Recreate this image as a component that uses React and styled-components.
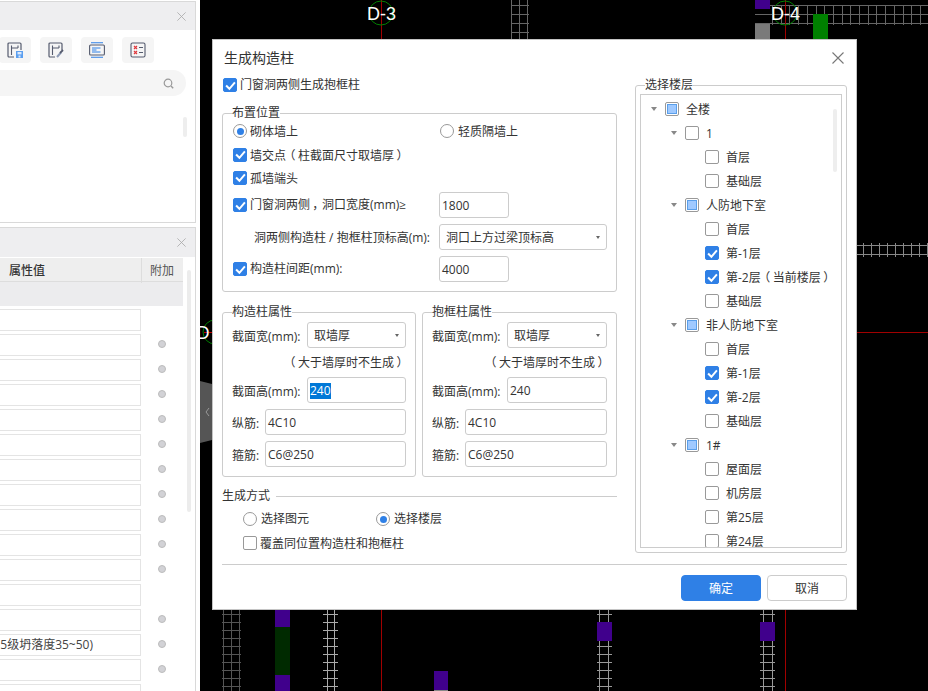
import React from "react";
import styled, { createGlobalStyle } from "styled-components";

const GlobalStyle = createGlobalStyle`
  html, body {
    margin: 0;
    padding: 0;
    background: #000;
  }
  body {
    font-family: "Open Sans", "Noto Sans CJK SC", sans-serif;
    font-size: 12px;
    color: #333;
  }
  * {
    box-sizing: border-box;
  }
`;

const Page = styled.div`
  display: flex;
  width: 928px;
  height: 691px;
  overflow: hidden;
`;

// left property panels
const Sidebar = styled.aside`
  width: 200px;
  flex: none;
  display: flex;
  flex-direction: column;
  background: #fff;
  padding-top: 1px;
`;

const Panel = styled.section`
  width: 196px;
  border: 1px solid #d9d9d9;
  border-left: none;
  display: flex;
  flex-direction: column;
  overflow: hidden;
  ${(p) => (p.$grow ? "flex: 1; margin-top: 4px; border-bottom: none;" : "height: 222px;")}
`;

const PanelHeader = styled.div`
  height: ${(p) => p.$h}px;
  flex: none;
  background: #eeeef0;
  display: flex;
  align-items: center;
  justify-content: flex-end;
  padding-right: 9px;
`;

const Toolbar = styled.div`
  display: flex;
  gap: 9px;
  margin: 7px 0 0 -1px;
`;

const ToolButton = styled.div`
  width: 32px;
  height: 26px;
  background: #f5f5f5;
  border-radius: 4px;
  display: flex;
  align-items: center;
  justify-content: center;
`;

const Search = styled.div`
  width: 186px;
  height: 26px;
  margin-top: 7px;
  background: #f5f5f5;
  border-radius: 0 13px 13px 0;
  display: flex;
  align-items: center;
  justify-content: flex-end;
  padding-right: 12px;
`;

const ListArea = styled.div`
  flex: 1;
  display: flex;
  justify-content: flex-end;
  padding: 21px 8px 0 0;
`;

const Thumb = styled.div`
  width: 4px;
  height: ${(p) => p.$h}px;
  border-radius: 2px;
  background: ${(p) => p.$c || "#eee"};
`;

const TableWrap = styled.div`
  flex: 1;
  display: flex;
  margin-top: 1px;
`;

const Table = styled.div`
  width: 183px;
  flex: none;
`;

const TableHead = styled.div`
  height: 24px;
  display: grid;
  grid-template-columns: 142px 41px;
  background: #eee;
  border-bottom: 1px solid #ddd;
  font-size: 12px;
  line-height: 25px;
`;

const HeadCell = styled.div`
  padding-left: ${(p) => p.$pad}px;
  font-weight: ${(p) => (p.$bold ? 500 : 400)};
  border-right: ${(p) => (p.$line ? "1px solid #ddd" : "none")};
  color: ${(p) => (p.$bold ? "#333" : "#555")};
`;

const GroupRow = styled.div`
  height: 24px;
  background: #ececee;
  margin-bottom: 3px;
`;

const PropRow = styled.div`
  height: 25px;
  display: grid;
  grid-template-columns: 141px 42px;
`;

const PropCell = styled.div`
  height: 22px;
  border: 1px solid #e4e4e4;
  border-left: none;
  overflow: hidden;
  display: flex;
  justify-content: flex-end;
  white-space: nowrap;
  line-height: 20px;
  padding-right: 47px;
  color: #444;
`;

const DotCell = styled.div`
  display: flex;
  align-items: flex-start;
  justify-content: center;
  padding-top: 6px;
`;

const Dot = styled.span`
  width: 8px;
  height: 8px;
  border-radius: 50%;
  background: #d2d2d6;
  border: 1px solid #bcbcbc;
`;

const ScrollColumn = styled.div`
  padding: 12px 0 0 4px;
`;

// CAD canvas
const Canvas = styled.main`
  position: relative;
  flex: 1;
  background: #000;
`;

const CadSvg = styled.svg`
  display: block;
`;

const CadText = styled.text`
  font-family: "Liberation Sans", sans-serif;
  font-size: 18px;
  fill: #fff;
`;

// dialog
const Dialog = styled.div`
  position: absolute;
  left: 12px;
  top: 39px;
  width: 645px;
  height: 571px;
  background: #fff;
  border: 1px solid #c4c4c4;
  padding: 0 9px;
  display: flex;
  flex-direction: column;
`;

const DialogHeader = styled.header`
  height: 36px;
  flex: none;
  display: flex;
  align-items: center;
  justify-content: space-between;
  padding: 0 3px 0 2px;
`;

const DialogTitle = styled.h1`
  margin: 0;
  font-size: 14px;
  font-weight: 400;
  line-height: 20px;
  color: #333;
`;

const DialogBody = styled.div`
  height: 488px;
  flex: none;
  display: grid;
  grid-template-columns: 395px 212px;
  column-gap: 18px;
`;

const LeftColumn = styled.div`
  display: flex;
  flex-direction: column;
`;

const Group = styled.fieldset`
  margin: ${(p) => p.$mt || 0}px 0 0;
  padding: ${(p) => p.$pad || "0 9px 9px"};
  border: 1px solid #ccc;
  border-radius: 3px;
  min-width: 0;
`;

const GroupTitle = styled.legend`
  margin-left: ${(p) => p.$ml ?? 0}px;
  padding: 0;
  font-size: 12px;
  line-height: 12px;
  background: #fff;
`;

const CheckLine = styled.label`
  height: ${(p) => p.$h || 24}px;
  margin-top: ${(p) => p.$mt || 0}px;
  display: flex;
  align-items: center;
  gap: ${(p) => p.$gap ?? 3}px;
  line-height: 16px;
  white-space: nowrap;
  padding-left: ${(p) => p.$pl || 0}px;
`;

// text beside a box sits a pixel lower than the box in the reference
const LineText = styled.span`
  padding-top: 2px;
`;

const RadioRow = styled.div`
  height: 24px;
  display: grid;
  grid-template-columns: 207px 1fr;
`;

const FormRow = styled.div`
  height: 26px;
  margin-top: ${(p) => p.$mt ?? 6}px;
  display: grid;
  grid-template-columns: 206px ${(p) => p.$w}px;
  align-items: center;
`;

const RowLabel = styled.div`
  padding: 2px 0 0 ${(p) => p.$pl || 0}px;
  white-space: nowrap;
  line-height: 16px;
`;

// the reference centres full-width punctuation in a one-em cell
const Punct = styled.span`
  display: inline-block;
  width: 12px;
  text-align: center;
  font-feature-settings: "palt";
`;

const BoxBase = styled.span`
  width: 14px;
  height: 14px;
  flex: none;
  display: inline-flex;
  align-items: center;
  justify-content: center;
`;

const CheckBox = styled(BoxBase)`
  border-radius: 2px;
  border: 1px solid ${(p) => (p.$state === "on" ? "#2f80e6" : "#999")};
  background: ${(p) => (p.$state === "on" ? "#2f80e6" : "#fff")};
`;

const PartialMark = styled.span`
  width: 10px;
  height: 10px;
  background: #9fc9ff;
  border: 1px solid #5a9fea;
`;

const RadioCircle = styled(BoxBase)`
  border-radius: 50%;
  border: 1px solid #999;
  background: #fff;
`;

const RadioDot = styled.span`
  width: 7px;
  height: 7px;
  border-radius: 50%;
  background: #2f80e6;
`;

const Field = styled.div`
  height: 26px;
  border: 1px solid #ccc;
  border-radius: 3px;
  background: #fff;
  padding-left: 2px;
  line-height: 25px;
  color: #333;
  white-space: nowrap;
`;

const Highlight = styled.span`
  display: inline-block;
  background: #0078d7;
  color: #fff;
  line-height: 16px;
`;

const SelectBox = styled(Field)`
  position: relative;
  padding-left: 6px;
  &::after {
    content: "";
    position: absolute;
    right: 6px;
    top: 11px;
    border-left: 2.5px solid transparent;
    border-right: 2.5px solid transparent;
    border-top: 3px solid #666;
  }
`;

const AttrColumns = styled.div`
  display: grid;
  grid-template-columns: 194px 195px;
  column-gap: 6px;
  margin-top: 14px;
`;

const AttrRow = styled.div`
  height: 26px;
  margin-top: ${(p) => p.$mt ?? 6}px;
  display: grid;
  grid-template-columns: ${(p) => (p.$short ? "33px" : "75px")} 1fr;
  align-items: center;
  white-space: nowrap;
`;

const AttrNote = styled.div`
  height: 29px;
  line-height: 30px;
  text-align: right;
  white-space: nowrap;
`;

const SectionLine = styled.div`
  display: flex;
  align-items: center;
  gap: 6px;
  height: 16px;
  margin-top: 11px;
  line-height: 16px;
  &::after {
    content: "";
    flex: 1;
    border-top: 1px solid #ccc;
  }
`;

const ModeRow = styled.div`
  display: grid;
  grid-template-columns: 133px 1fr;
  height: 16px;
  margin-top: 7px;
  padding-left: 21px;
`;

const FloorBox = styled.div`
  height: 454px;
  border: 1px solid #ccc;
  overflow: hidden;
  position: relative;
  padding-top: 2px;
`;

const TreeThumb = styled(Thumb)`
  position: absolute;
  right: 4px;
  top: 14px;
`;

const TreeRow = styled.div`
  height: 24px;
  display: flex;
  align-items: center;
  padding-left: ${(p) => 10 + p.$level * 20}px;
  white-space: nowrap;
`;

const Caret = styled.span`
  width: 14px;
  flex: none;
  display: flex;
  &::before {
    content: "";
    border-left: 3.5px solid transparent;
    border-right: 3.5px solid transparent;
    border-top: 4px solid ${(p) => (p.$show ? "#888" : "transparent")};
  }
`;

const TreeLabel = styled.span`
  margin-left: 7px;
  padding-top: 2px;
  line-height: 16px;
`;

const Divider = styled.div`
  height: 1px;
  flex: none;
  background: #ccc;
`;

const DialogFooter = styled.footer`
  display: flex;
  justify-content: flex-end;
  gap: 6px;
  padding-top: 10px;
`;

const Button = styled.button`
  width: 80px;
  height: 26px;
  padding: 0;
  border-radius: 4px;
  font: inherit;
  font-size: 12px;
  border: 1px solid ${(p) => (p.$primary ? "#2f80e6" : "#ccc")};
  background: ${(p) => (p.$primary ? "#2f80e6" : "#fff")};
  color: ${(p) => (p.$primary ? "#fff" : "#333")};
`;

const Tick = () => (
  <svg width="11" height="11" viewBox="0 0 10 10">
    <path d="M1 5 L4 8 L9 2.2" fill="none" stroke="#fff" strokeWidth="1.8" />
  </svg>
);

const Check = ({ state }) => (
  <CheckBox $state={state}>
    {state === "on" && <Tick />}
    {state === "partial" && <PartialMark />}
  </CheckBox>
);

const Radio = ({ on }) => <RadioCircle>{on && <RadioDot />}</RadioCircle>;

const CloseIcon = ({ size, color }) => (
  <svg width={size} height={size} viewBox="0 0 12 12">
    <path d="M0.5 0.5 L11.5 11.5 M11.5 0.5 L0.5 11.5" stroke={color} strokeWidth="1.1" fill="none" />
  </svg>
);

const FrameIcon = ({ children }) => (
  <svg width="16" height="16" viewBox="0 0 16 16" fill="none">
    <path d="M7 15 H2 a1 1 0 0 1 -1 -1 V2 a1 1 0 0 1 1 -1 H13 a1 1 0 0 1 1 1 V8" stroke="#555b6e" strokeWidth="1.2" />
    <path d="M4.5 13 V3.5 M4.5 6 H11 M11 3.5 V6" stroke="#555b6e" strokeWidth="1.1" />
    {children}
  </svg>
);

const SaveIcon = () => (
  <FrameIcon>
    <rect x="9" y="9" width="7" height="7" fill="#5b9ff0" />
    <rect x="10.5" y="10" width="4" height="2.4" fill="#dce9fb" />
    <rect x="11.5" y="13.5" width="2" height="2" fill="#dce9fb" />
  </FrameIcon>
);

const PickIcon = () => (
  <FrameIcon>
    <path d="M9 15 L13 10.5" stroke="#8d9ab5" strokeWidth="2" />
    <path d="M12 11 L15 8" stroke="#555b6e" strokeWidth="1.8" />
  </FrameIcon>
);

const AlignIcon = () => (
  <svg width="16" height="16" viewBox="0 0 16 16" fill="none">
    <path d="M2 0.8 H14 M2 15.2 H14" stroke="#2f80e6" strokeWidth="1.1" />
    <rect x="0.6" y="3" width="14.8" height="10" rx="1" stroke="#555b6e" strokeWidth="1.1" />
    <path d="M3 6 H11.5 M3 8 H7.5 M3 10 H11.5" stroke="#2f80e6" strokeWidth="1" />
  </svg>
);

const CheckListIcon = () => (
  <svg width="16" height="16" viewBox="0 0 16 16" fill="none">
    <rect x="1" y="1" width="14" height="14" rx="1.5" stroke="#555b6e" strokeWidth="1.1" />
    <path d="M4 4 L7 7 M7 4 L4 7 M4 9 L7 12 M7 9 L4 12" stroke="#e0393e" strokeWidth="1.2" />
    <path d="M9 5.5 H13 M9 10.5 H13" stroke="#555b6e" strokeWidth="1.1" />
  </svg>
);

const SearchIcon = () => (
  <svg width="11" height="11" viewBox="0 0 11 11" fill="none">
    <circle cx="5" cy="5" r="3.8" stroke="#999" strokeWidth="1.2" />
    <path d="M8 8 L10.2 10.2" stroke="#999" strokeWidth="1.4" />
  </svg>
);

const steps = (from, to, step) => {
  const out = [];
  for (let v = from; v <= to; v += step) out.push(Math.round(v));
  return out;
};

// a block of rebar-like grid lines in page coordinates
const GridBlock = ({ xs, ys, x1, x2, y1, y2, color }) => (
  <g stroke={color} strokeWidth="1">
    {xs.map((x) => (
      <line key={`v${x}`} x1={x + 0.5} x2={x + 0.5} y1={y1} y2={y2} />
    ))}
    {ys.map((y) => (
      <line key={`h${y}`} x1={x1} x2={x2} y1={y + 0.5} y2={y + 0.5} />
    ))}
  </g>
);

const CadDrawing = () => (
  <CadSvg width="728" height="691" viewBox="200 0 728 691">
    <GridBlock xs={[511, 519, 527]} ys={[5, 14, 23, 32]} x1={511} x2={529} y1={0} y2={39} color="#666" />
    <GridBlock xs={steps(772, 928, 8.7)} ys={[5, 14, 23]} x1={755} x2={928} y1={5} y2={25} color="#666" />
    <rect x="755" y="0" width="15" height="9" fill="#40008c" />
    <rect x="755" y="24" width="15" height="15" fill="#7a7a7a" />
    <rect x="813" y="14" width="15" height="25" fill="#008000" />
    <line x1="381.5" x2="381.5" y1="0" y2="39" stroke="#a00000" />
    <line x1="785.5" x2="785.5" y1="0" y2="39" stroke="#a00000" />
    <circle cx="381" cy="13" r="12" fill="none" stroke="#008000" />
    <circle cx="785" cy="13" r="12" fill="none" stroke="#008000" />
    <CadText x="367" y="19.5">D-3</CadText>
    <CadText x="771" y="19.5">D-4</CadText>

    <GridBlock xs={steps(863, 928, 8)} ys={[245, 254]} x1={857} x2={928} y1={243} y2={257} color="#888" />
    <line x1="857" x2="928" y1="332.5" y2="332.5" stroke="#a00000" />

    <line x1="204" x2="212" y1="332.5" y2="332.5" stroke="#c00000" />
    <circle cx="215" cy="332" r="12" fill="none" stroke="#008000" />
    <CadText x="196.5" y="338.5">D</CadText>
    <path d="M200 381 L212 384 V440 L200 443 Z" fill="#555" />
    <path d="M209 408 L206 412 L209 416" fill="none" stroke="#999" strokeWidth="1" />

    <GridBlock xs={[223, 231, 239]} ys={steps(614, 690, 8)} x1={222} x2={241} y1={610} y2={691} color="#555" />
    <GridBlock xs={[327, 334]} ys={steps(614, 690, 8)} x1={323} x2={338} y1={610} y2={691} color="#aaa" />
    <GridBlock xs={[599, 608]} ys={steps(614, 690, 8)} x1={597} x2={612} y1={610} y2={691} color="#999" />
    <GridBlock xs={[763, 772]} ys={steps(614, 690, 8)} x1={760} x2={775} y1={610} y2={691} color="#999" />
    <rect x="275" y="610" width="15" height="17" fill="#40008c" />
    <rect x="275" y="627" width="15" height="48" fill="#002a00" />
    <rect x="275" y="675" width="15" height="16" fill="#40008c" />
    <rect x="597" y="622" width="15" height="19" fill="#40008c" />
    <rect x="760" y="622" width="15" height="19" fill="#40008c" />
    <rect x="434" y="671" width="14" height="19" fill="#40008c" />
    <rect x="434" y="690" width="14" height="1" fill="#888" />
    <line x1="381.5" x2="381.5" y1="610" y2="691" stroke="#a00000" />
    <line x1="785.5" x2="785.5" y1="610" y2="691" stroke="#a00000" />
  </CadSvg>
);

const floors = [
  [0, "全楼", "partial", true],
  [1, "1", "off", true],
  [2, "首层", "off"],
  [2, "基础层", "off"],
  [1, "人防地下室", "partial", true],
  [2, "首层", "off"],
  [2, "第-1层", "on"],
  [2, <>第-2层<Punct>（</Punct>当前楼层<Punct>）</Punct></>, "on"],
  [2, "基础层", "off"],
  [1, "非人防地下室", "partial", true],
  [2, "首层", "off"],
  [2, "第-1层", "on"],
  [2, "第-2层", "on"],
  [2, "基础层", "off"],
  [1, "1#", "partial", true],
  [2, "屋面层", "off"],
  [2, "机房层", "off"],
  [2, "第25层", "off"],
  [2, "第24层", "off"],
];

const rowTexts = { 13: "5级坍落度35~50)" };
const noDot = [0, 11, 15];

const AttrGroup = ({ title, selected }) => (
  <Group $pad="0 9px 9px">
    <GroupTitle>{title}</GroupTitle>
    <AttrRow $mt={4}>
      <LineText>截面宽(mm):</LineText>
      <SelectBox>取墙厚</SelectBox>
    </AttrRow>
    <AttrNote><Punct>（</Punct>大于墙厚时不生成<Punct>）</Punct></AttrNote>
    <AttrRow $mt={0}>
      <LineText>截面高(mm):</LineText>
      <Field>{selected ? <Highlight>240</Highlight> : "240"}</Field>
    </AttrRow>
    <AttrRow $short>
      <LineText>纵筋:</LineText>
      <Field>4C10</Field>
    </AttrRow>
    <AttrRow $short>
      <LineText>箍筋:</LineText>
      <Field>C6@250</Field>
    </AttrRow>
  </Group>
);

export default function App() {
  return (
    <>
      <GlobalStyle />
      <Page>
        <Sidebar>
          <Panel>
            <PanelHeader $h={28}>
              <CloseIcon size={9} color="#aaa" />
            </PanelHeader>
            <Toolbar>
              <ToolButton><SaveIcon /></ToolButton>
              <ToolButton><PickIcon /></ToolButton>
              <ToolButton><AlignIcon /></ToolButton>
              <ToolButton><CheckListIcon /></ToolButton>
            </Toolbar>
            <Search><SearchIcon /></Search>
            <ListArea><Thumb $h={20} /></ListArea>
          </Panel>
          <Panel $grow>
            <PanelHeader $h={29}>
              <CloseIcon size={9} color="#aaa" />
            </PanelHeader>
            <TableWrap>
              <Table>
                <TableHead>
                  <HeadCell $pad={9} $bold $line>属性值</HeadCell>
                  <HeadCell $pad={8}>附加</HeadCell>
                </TableHead>
                <GroupRow />
                {steps(0, 15, 1).map((i) => (
                  <PropRow key={i}>
                    <PropCell>{rowTexts[i]}</PropCell>
                    <DotCell>{!noDot.includes(i) && <Dot />}</DotCell>
                  </PropRow>
                ))}
              </Table>
              <ScrollColumn><Thumb $h={242} $c="#ececec" /></ScrollColumn>
            </TableWrap>
          </Panel>
        </Sidebar>

        <Canvas>
          <CadDrawing />
          <Dialog>
            <DialogHeader>
              <DialogTitle>生成构造柱</DialogTitle>
              <CloseIcon size={12} color="#777" />
            </DialogHeader>
            <DialogBody>
              <LeftColumn>
                <CheckLine $h={18} $pl={1}>
                  <Check state="on" />
                  <span>门窗洞两侧生成抱框柱</span>
                </CheckLine>

                <Group $mt={13} $pad="0 9px 9px 10px">
                  <GroupTitle $ml={-1}>布置位置</GroupTitle>
                  <RadioRow>
                    <CheckLine $gap={3}><Radio on /><LineText>砌体墙上</LineText></CheckLine>
                    <CheckLine $gap={4}><Radio /><LineText>轻质隔墙上</LineText></CheckLine>
                  </RadioRow>
                  <CheckLine $h={23}>
                    <Check state="on" />
                    <LineText>墙交点<Punct>（</Punct>柱截面尺寸取墙厚<Punct>）</Punct></LineText>
                  </CheckLine>
                  <CheckLine $h={23}><Check state="on" /><LineText>孤墙端头</LineText></CheckLine>
                  <FormRow $w={70} $mt={3}>
                    <CheckLine>
                      <Check state="on" />
                      <span>门窗洞两侧<Punct>，</Punct>洞口宽度(mm)≥</span>
                    </CheckLine>
                    <Field>1800</Field>
                  </FormRow>
                  <FormRow $w={168}>
                    <RowLabel $pl={21}>洞两侧构造柱 / 抱框柱顶标高(m):</RowLabel>
                    <SelectBox>洞口上方过梁顶标高</SelectBox>
                  </FormRow>
                  <FormRow $w={70}>
                    <CheckLine><Check state="on" /><span>构造柱间距(mm):</span></CheckLine>
                    <Field>4000</Field>
                  </FormRow>
                </Group>

                <AttrColumns>
                  <AttrGroup title="构造柱属性" selected />
                  <AttrGroup title="抱框柱属性" />
                </AttrColumns>

                <SectionLine>生成方式</SectionLine>
                <ModeRow>
                  <CheckLine $h={16} $gap={4}><Radio /><span>选择图元</span></CheckLine>
                  <CheckLine $h={16} $gap={4}><Radio on /><span>选择楼层</span></CheckLine>
                </ModeRow>
                <CheckLine $h={16} $pl={21} $mt={8}>
                  <Check state="off" />
                  <LineText>覆盖同位置构造柱和抱框柱</LineText>
                </CheckLine>
              </LeftColumn>

              <div>
                <Group $mt={3} $pad="3px 4px 4px">
                  <GroupTitle $ml={5}>选择楼层</GroupTitle>
                  <FloorBox>
                    <TreeThumb $h={63} />
                    {floors.map(([level, name, state, parent], i) => (
                      <TreeRow key={i} $level={level}>
                        <Caret $show={parent} />
                        <Check state={state} />
                        <TreeLabel>{name}</TreeLabel>
                      </TreeRow>
                    ))}
                  </FloorBox>
                </Group>
              </div>
            </DialogBody>
            <Divider />
            <DialogFooter>
              <Button $primary>确定</Button>
              <Button>取消</Button>
            </DialogFooter>
          </Dialog>
        </Canvas>
      </Page>
    </>
  );
}
